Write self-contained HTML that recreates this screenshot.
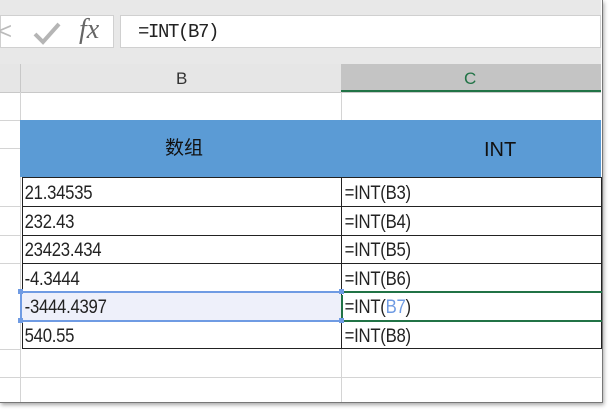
<!DOCTYPE html><html><head><style>
body{margin:0;width:611px;height:411px;background:#fff;position:relative;overflow:hidden;font-family:"Liberation Sans","Noto Sans CJK SC",sans-serif}
.a{position:absolute}
.cell{position:absolute;font-size:19px;color:#222;line-height:28px;padding-left:3px;box-sizing:border-box;transform:scaleX(0.88);transform-origin:left center;letter-spacing:-0.3px}
</style></head><body>
<div class="a" style="left:0;top:0;width:602px;height:402px;background:#fff;box-shadow:1px 2px 4px rgba(0,0,0,.35);border-right:1px solid #777;border-bottom:1px solid #777"></div>
<div class="a" style="left:0;top:0;width:601px;height:64px;background:#e8e8e8"></div>
<div class="a" style="left:0;top:15px;width:114px;height:33px;background:#fff;border:1px solid #d0d0d0;box-sizing:border-box"></div>
<div class="a" style="left:-2px;top:18px;font-size:24px;color:#bbb">&lt;</div>
<svg class="a" style="left:32px;top:20px" width="30" height="26"><path d="M3 14 L11 22 L27 4" stroke="#b5b5b5" stroke-width="4" fill="none"/></svg>
<div class="a" style="left:79px;top:14px;font-family:'Liberation Serif',serif;font-style:italic;font-size:28px;color:#666">fx</div>
<div class="a" style="left:120px;top:15px;width:481px;height:33px;background:#fff;border:1px solid #d0d0d0;box-sizing:border-box"></div>
<div class="a" style="left:138px;top:21px;font-family:'Liberation Mono',monospace;font-size:19px;color:#222;letter-spacing:-1.4px">=INT(B7)</div>
<div class="a" style="left:0;top:64px;width:601px;height:28px;background:#e6e6e6;border-bottom:1px solid #c8c8c8"></div>
<div class="a" style="left:20px;top:64px;width:1px;height:28px;background:#c8c8c8"></div>
<div class="a" style="left:176px;top:69px;font-size:17px;color:#333">B</div>
<div class="a" style="left:341px;top:64px;width:260px;height:28px;background:#c4c4c4;border-bottom:2px solid #217346;box-sizing:border-box"></div>
<div class="a" style="left:464px;top:69px;font-size:17px;color:#217346">C</div>
<div class="a" style="left:20px;top:92px;width:1px;height:310px;background:#d4d4d4"></div>
<div class="a" style="left:341px;top:92px;width:1px;height:28px;background:#d4d4d4"></div>
<div class="a" style="left:0;top:120px;width:20px;height:1px;background:#d4d4d4"></div>
<div class="a" style="left:20px;top:120px;width:581px;height:57px;background:#5b9bd5"></div>
<div class="a" style="left:20px;top:120px;width:328px;height:57px;line-height:57px;text-align:center;font-size:19px;color:#111">数组</div>
<div class="a" style="left:484px;top:120px;height:57px;line-height:60px;font-size:20px;color:#111">INT</div>
<div class="a" style="left:22px;top:177px;width:580px;height:172px;border:1px solid #222;box-sizing:border-box"></div>
<div class="a" style="left:341px;top:177px;width:1px;height:172px;background:#222"></div>
<div class="a" style="left:22px;top:206px;width:580px;height:1px;background:#222"></div>
<div class="a" style="left:22px;top:235px;width:580px;height:1px;background:#222"></div>
<div class="a" style="left:22px;top:263px;width:580px;height:1px;background:#222"></div>
<div class="a" style="left:22px;top:320px;width:580px;height:1px;background:#222"></div>
<div class="a" style="left:22px;top:292px;width:319px;height:28px;background:#eef0fa"></div>
<div class="a" style="left:20px;top:291px;width:321px;height:2px;background:#6f9be3"></div>
<div class="a" style="left:20px;top:320px;width:321px;height:2px;background:#6f9be3"></div>
<div class="a" style="left:20px;top:293px;width:2px;height:27px;background:#6f9be3"></div>
<div class="a" style="left:18px;top:289px;width:5px;height:5px;background:#6f9be3"></div>
<div class="a" style="left:18px;top:318px;width:5px;height:5px;background:#6f9be3"></div>
<div class="a" style="left:339px;top:289px;width:5px;height:5px;background:#6f9be3"></div>
<div class="a" style="left:339px;top:318px;width:5px;height:5px;background:#6f9be3"></div>
<div class="a" style="left:344px;top:291px;width:258px;height:2px;background:#217346"></div>
<div class="a" style="left:344px;top:320px;width:258px;height:2px;background:#217346"></div>
<div class="a" style="left:341px;top:295px;width:2px;height:23px;background:#217346"></div>
<div class="cell" style="left:22px;top:180px">21.34535</div>
<div class="cell" style="left:22px;top:209px">232.43</div>
<div class="cell" style="left:22px;top:237px">23423.434</div>
<div class="cell" style="left:22px;top:266px">-4.3444</div>
<div class="cell" style="left:22px;top:294px">-3444.4397</div>
<div class="cell" style="left:22px;top:323px">540.55</div>
<div class="cell" style="left:342px;top:180px">=INT(B3)</div>
<div class="cell" style="left:342px;top:209px">=INT(B4)</div>
<div class="cell" style="left:342px;top:237px">=INT(B5)</div>
<div class="cell" style="left:342px;top:266px">=INT(B6)</div>
<div class="cell" style="left:342px;top:294px">=INT(<span style="color:#6f9be3">B7</span>)</div>
<div class="cell" style="left:342px;top:323px">=INT(B8)</div>
<div class="a" style="left:341px;top:349px;width:1px;height:53px;background:#d4d4d4"></div>
<div class="a" style="left:0;top:377px;width:601px;height:1px;background:#d4d4d4"></div>
<div class="a" style="left:0;top:148px;width:20px;height:1px;background:#d4d4d4"></div>
<div class="a" style="left:0;top:206px;width:20px;height:1px;background:#d4d4d4"></div>
<div class="a" style="left:0;top:235px;width:20px;height:1px;background:#d4d4d4"></div>
<div class="a" style="left:0;top:263px;width:20px;height:1px;background:#d4d4d4"></div>
<div class="a" style="left:0;top:349px;width:20px;height:1px;background:#d4d4d4"></div>
</body></html>
